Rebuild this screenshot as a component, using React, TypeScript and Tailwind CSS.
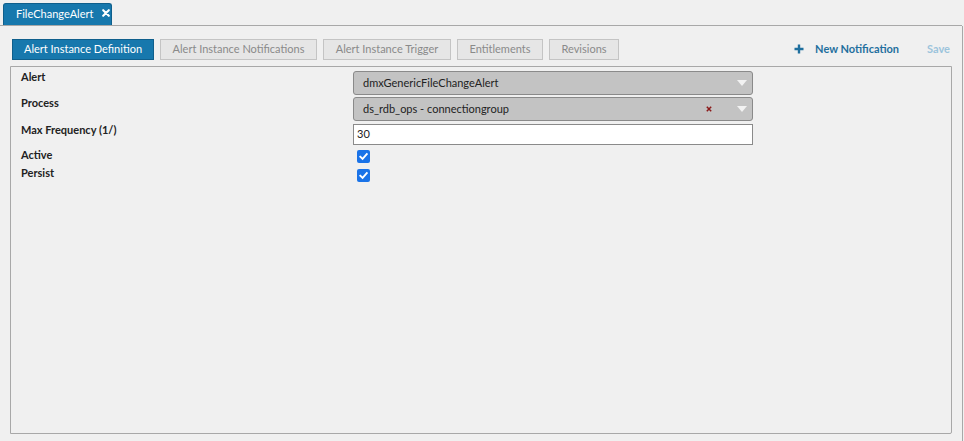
import React from "react";

const font = { fontFamily: 'Lato, "Noto Sans", sans-serif' };

function Check() {
  return (
    <div className="w-[13px] h-[13px] rounded-[2px] bg-[#1a73e8] flex items-center justify-center">
      <svg width="11" height="11" viewBox="0 0 12 12">
        <path d="M2.5 6.2 L5 8.6 L9.6 3.4" fill="none" stroke="white" strokeWidth="2" strokeLinecap="square" />
      </svg>
    </div>
  );
}

function Caret() {
  return (
    <svg width="10" height="6" viewBox="0 0 10 6" className="mr-[5px]">
      <path d="M0 0 L10 0 L5 6 Z" fill="#f2f2f2" />
    </svg>
  );
}

const btn = "h-[21px] bg-[#e6e6e6] border border-[#c4c4c4] text-[#8a8a8a] flex items-center justify-center";
const label = "w-[342px] pl-[10px] font-bold leading-[14px]";

export default function App() {
  return (
    <div className="w-[964px] h-[441px] bg-[#f0f0f0] flex flex-col text-[11px] text-[#222] whitespace-nowrap" style={font}>
      <div className="h-[26px] flex items-end pl-[3px] border-b border-[#a8a8a8] mr-[2px]">
        <div className="h-[22px] w-[109px] bg-[#1778ad] border border-[#0f5f8c] border-b-0 rounded-t-[3px] flex items-center pl-[12px] text-white">
          <span>FileChangeAlert</span>
          <svg width="8" height="8" viewBox="0 0 10 10" className="ml-[9px] mb-[3px] shrink-0">
            <path d="M1.5 1.5 L8.5 8.5 M8.5 1.5 L1.5 8.5" stroke="white" strokeWidth="2.6" strokeLinecap="round" />
          </svg>
        </div>
      </div>
      <div className="flex-1 flex flex-col border-r border-[#a8a8a8] mr-[1px]">
        <div className="h-[40px] flex items-end pb-[6px] pl-[12px] pr-[12px]">
          <div className="flex gap-[6px]">
            <div className="h-[21px] w-[142px] bg-[#1778ad] border border-[#0f5f8c] text-white flex items-center justify-center">Alert Instance Definition</div>
            <div className={`${btn} w-[157px]`}>Alert Instance Notifications</div>
            <div className={`${btn} w-[128px]`}>Alert Instance Trigger</div>
            <div className={`${btn} w-[86px]`}>Entitlements</div>
            <div className={`${btn} w-[70px]`}>Revisions</div>
          </div>
          <div className="flex-1" />
          <div className="flex items-center h-[21px] text-[#1f6f9e] font-bold">
            <svg width="10" height="10" viewBox="0 0 10 10" className="mr-[11px] mb-[2px]">
              <path d="M5 0.5 V9.5 M0.5 5 H9.5" stroke="#1f6f9e" strokeWidth="2.4" />
            </svg>
            <span>New Notification</span>
          </div>
          <div className="ml-[28px] h-[21px] flex items-center font-bold text-[#9cc4dc]">Save</div>
        </div>
        <div className="ml-[10px] mr-[10px] mb-[7px] flex-1 border border-[#a8a8a8] rounded-br-[2px]">
          <div className="flex flex-col pt-[4px]">
            <div className="flex h-[26px]">
              <div className={`${label} -mt-[1px]`}>Alert</div>
              <div className="w-[400px] h-[24px] bg-[#c3c3c3] border border-[#8a8a8a] rounded-[3px] flex items-center pl-[9px] justify-between">
                <span>dmxGenericFileChangeAlert</span>
                <Caret />
              </div>
            </div>
            <div className="flex h-[27px]">
              <div className={`${label} -mt-[1px]`}>Process</div>
              <div className="w-[400px] h-[24px] bg-[#c3c3c3] border border-[#8a8a8a] rounded-[3px] flex items-center pl-[9px]">
                <span className="flex-1">ds_rdb_ops - connectiongroup</span>
                <svg width="6" height="6" viewBox="0 0 6 6" className="mr-[25px]">
                  <path d="M0.8 0.8 L5.2 5.2 M5.2 0.8 L0.8 5.2" stroke="#8b1a1a" strokeWidth="1.5" />
                </svg>
                <Caret />
              </div>
            </div>
            <div className="flex h-[26px]">
              <div className={`${label} -mt-[1px]`}>Max Frequency (1/)</div>
              <div className="w-[400px] h-[21px] bg-white border border-[#8a8a8a] flex items-center pl-[3px]">30</div>
            </div>
            <div className="flex h-[19px]">
              <div className={`${label} -mt-[2px]`}>Active</div>
              <div className="pl-[4px]"><Check /></div>
            </div>
            <div className="flex h-[19px]">
              <div className={`${label} -mt-[3px]`}>Persist</div>
              <div className="pl-[4px]"><Check /></div>
            </div>
          </div>
        </div>
      </div>
    </div>
  );
}
